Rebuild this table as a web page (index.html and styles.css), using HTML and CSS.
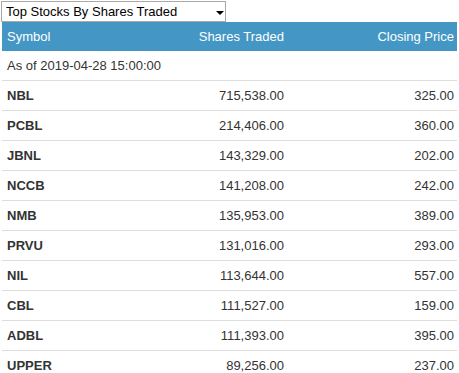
FILE: index.html
```html
<!DOCTYPE html>
<html>
<head>
<meta charset="utf-8">
<link rel="stylesheet" href="styles.css">
</head>
<body>
<div class="widget">
  <div class="picker">
    <select class="picker-select">
      <option>Top Stocks By Shares Traded</option>
    </select>
  </div>
  <table class="stocks">
    <colgroup>
      <col class="c-sym"><col class="c-shares"><col class="c-price">
    </colgroup>
    <thead>
      <tr><th class="left">Symbol</th><th>Shares Traded</th><th>Closing Price</th></tr>
    </thead>
    <tbody>
      <tr class="asof"><td colspan="3">As of 2019-04-28 15:00:00</td></tr>
      <tr><td class="sym">NBL</td><td>715,538.00</td><td>325.00</td></tr>
      <tr><td class="sym">PCBL</td><td>214,406.00</td><td>360.00</td></tr>
      <tr><td class="sym">JBNL</td><td>143,329.00</td><td>202.00</td></tr>
      <tr><td class="sym">NCCB</td><td>141,208.00</td><td>242.00</td></tr>
      <tr><td class="sym">NMB</td><td>135,953.00</td><td>389.00</td></tr>
      <tr><td class="sym">PRVU</td><td>131,016.00</td><td>293.00</td></tr>
      <tr><td class="sym">NIL</td><td>113,644.00</td><td>557.00</td></tr>
      <tr><td class="sym">CBL</td><td>111,527.00</td><td>159.00</td></tr>
      <tr><td class="sym">ADBL</td><td>111,393.00</td><td>395.00</td></tr>
      <tr><td class="sym">UPPER</td><td>89,256.00</td><td>237.00</td></tr>
    </tbody>
  </table>
</div>
</body>
</html>
```
FILE: styles.css
```css
html, body {
  margin: 0;
  padding: 0;
  background: #fff;
}
body {
  font-family: "Liberation Sans", Arial, sans-serif;
  font-size: 13px;
  color: #333;
}
.widget {
  padding: 1px 2px 0 2px;
}
.picker {
  position: relative;
  width: 225px;
  height: 21px;
  margin-left: -1px;
}
.picker::after {
  content: "";
  position: absolute;
  left: 215px;
  top: 10px;
  border-left: 4px solid transparent;
  border-right: 4px solid transparent;
  border-top: 4px solid #000;
  pointer-events: none;
}
.picker-select {
  -webkit-appearance: none;
  appearance: none;
  display: block;
  width: 225px;
  height: 21px;
  margin: 0;
  padding: 0 0 0 4px;
  border: 1px solid #a9a9a9;
  border-radius: 0;
  background: #fff;
  font-family: "Liberation Sans", Arial, sans-serif;
  font-size: 13px;
  color: #000;
  line-height: 19px;
  outline: none;
}
.stocks {
  width: 455px;
  border-collapse: collapse;
  table-layout: fixed;
}
.c-sym { width: 145px; }
.c-shares { width: 140px; }
.c-price { width: 170px; }
.stocks th {
  background: #4497c5;
  color: #fff;
  font-weight: normal;
  text-align: right;
  height: 29px;
  padding: 0 3px 0 5px;
  vertical-align: middle;
}
.stocks th.left { text-align: left; }
.stocks td {
  height: 29px;
  padding: 0 3px 0 5px;
  text-align: right;
  border-bottom: 1px solid #dddddd;
  vertical-align: middle;
  white-space: nowrap;
}
.stocks td.sym {
  text-align: left;
  font-weight: bold;
}
.stocks tr.asof td {
  text-align: left;
}
```
